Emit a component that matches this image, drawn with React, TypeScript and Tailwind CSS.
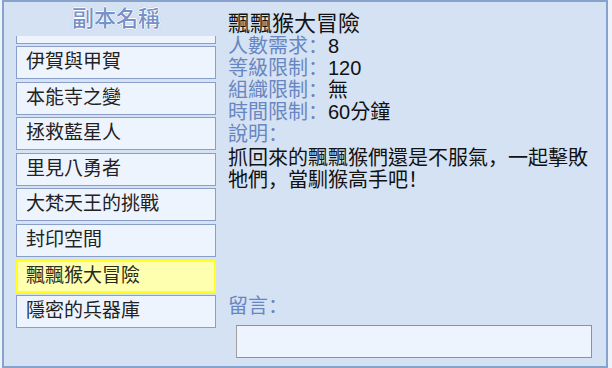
import React from "react";

const FONT = '"Liberation Sans", "Noto Sans CJK TC", sans-serif';
const P = ({ c }: { c: string }) => (
  <span style={{ fontFamily: '"Noto Sans CJK SC", sans-serif', lineHeight: 0 }}>{c}</span>
);

const items = [
  "",
  "伊賀與甲賀",
  "本能寺之變",
  "拯救藍星人",
  "里見八勇者",
  "大梵天王的挑戰",
  "封印空間",
  "飄飄猴大冒險",
  "隱密的兵器庫",
];

export default function App() {
  return (
    <div
      className="w-[612px] h-[368px] bg-[#eef3fb] pl-[2px] pr-[4px] overflow-hidden"
      style={{ fontFamily: FONT }}
    >
      <div className="h-full flex bg-[#d5e2f3] border-t-[2px] border-l-[2px] border-r-[2px] border-b-[2px] border-[#87a3cc]">
        <div className="w-[212px] pl-[12px] flex flex-col">
          <div className="h-[34px] w-[200px] flex items-center justify-center text-[22px] leading-none font-medium text-[#7891c8] [text-shadow:_-1px_0_#fff,1px_0_#fff,0_-1px_#fff,0_1px_#fff,0_0_2px_#5a74ac]">
            副本名稱
          </div>
          <div className="w-[200px] h-[300px] overflow-hidden">
            <div className="-mt-[25.5px] flex flex-col gap-[2.6px]">
              {items.map((t, i) => {
                const sel = t === "飄飄猴大冒險";
                return (
                  <div
                    key={i}
                    className={
                      sel
                        ? "h-[33px] border-2 border-[#ffff22] bg-[#ffffb0] pl-[8px] pt-[2px] text-[19px] leading-[24px] text-[#2a2a1a]"
                        : "h-[33px] border border-[#8a9fc8] bg-[#eef4fe] pl-[9px] pt-[3px] text-[19px] leading-[24px] text-[#222]"
                    }
                  >
                    {t}
                  </div>
                );
              })}
            </div>
          </div>
        </div>
        <div className="flex-1 flex flex-col pl-[12px] pt-[11px] pb-[8px] pr-[14px]">
          <div className="text-[22px] leading-[22px] text-[#111]">飄飄猴大冒險</div>
          <div className="text-[20px] leading-[22px]">
            <div>
              <span className="text-[#6887c2]">人數需求<P c="：" /></span>
              <span className="text-[#111]">8</span>
            </div>
            <div>
              <span className="text-[#6887c2]">等級限制<P c="：" /></span>
              <span className="text-[#111]">120</span>
            </div>
            <div>
              <span className="text-[#6887c2]">組織限制<P c="：" /></span>
              <span className="text-[#111]">無</span>
            </div>
            <div>
              <span className="text-[#6887c2]">時間限制<P c="：" /></span>
              <span className="text-[#111]">60分鐘</span>
            </div>
            <div className="text-[#6887c2]">
              說明<P c="：" />
            </div>
            <div className="text-[#111] w-[372px] mt-[2px]">
              抓回來的飄飄猴們還是不服氣<P c="，" />一起擊敗牠們<P c="，" />當馴猴高手吧<P c="！" />
            </div>
          </div>
          <div className="flex-1" />
          <div className="text-[20px] leading-[22px] text-[#6887c2]">
            留言<P c="：" />
          </div>
          <div className="mt-[8px] ml-[8px] w-[356px] h-[33px] bg-[#eef4fe] border border-[#8192b8] border-l-[#a0a0a0]" />
        </div>
      </div>
    </div>
  );
}
